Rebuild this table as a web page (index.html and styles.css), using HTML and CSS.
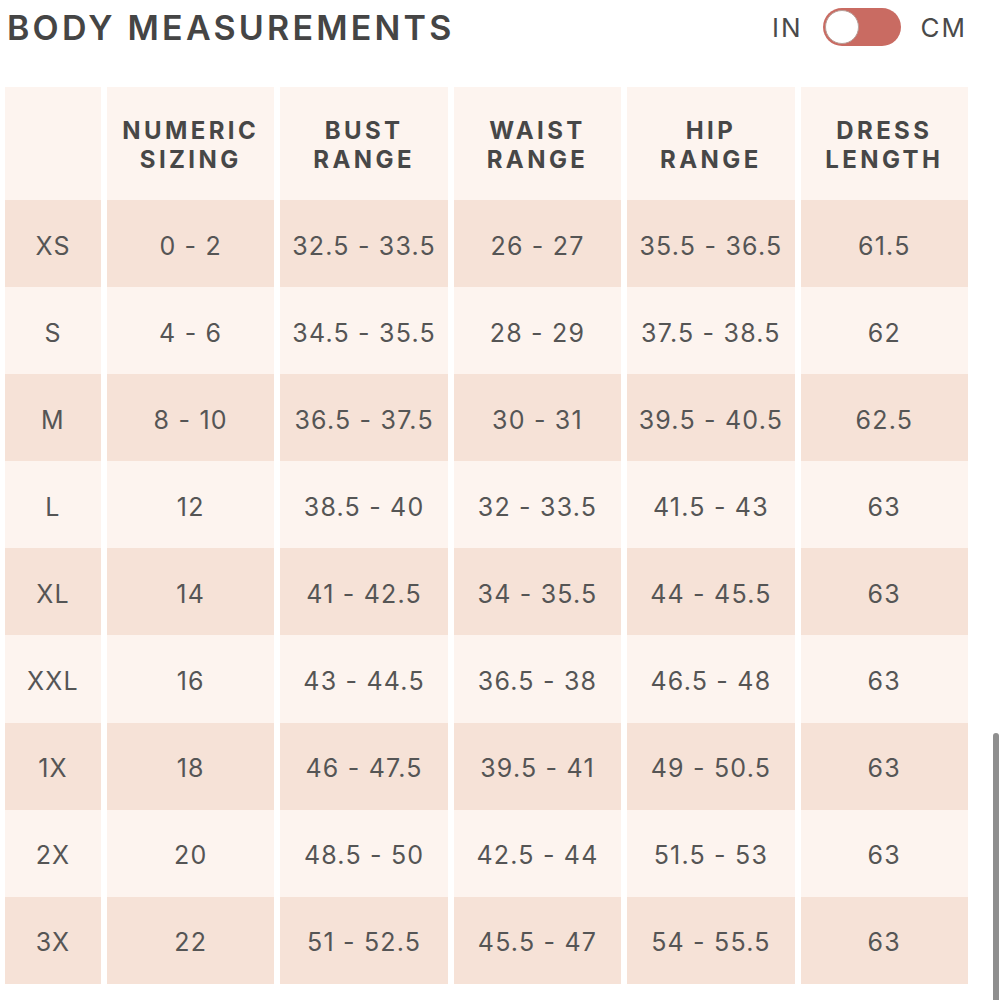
FILE: index.html
```html
<!DOCTYPE html>
<html>
<head>
<meta charset="utf-8">
<link rel="stylesheet" href="styles.css">
</head>
<body>
<div class="page">
  <div class="top">
    <h1 class="title">BODY MEASUREMENTS</h1>
    <div class="units">
      <span class="unit">IN</span>
      <span class="toggle"><span class="knob"></span></span>
      <span class="unit">CM</span>
    </div>
  </div>
  <div class="table">
    <div class="row head">
      <div class="cell"></div>
      <div class="cell">NUMERIC<br>SIZING</div>
      <div class="cell">BUST<br>RANGE</div>
      <div class="cell">WAIST<br>RANGE</div>
      <div class="cell">HIP<br>RANGE</div>
      <div class="cell">DRESS<br>LENGTH</div>
    </div>
    <div class="row dark"><div class="cell">XS</div><div class="cell">0 - 2</div><div class="cell">32.5 - 33.5</div><div class="cell">26 - 27</div><div class="cell">35.5 - 36.5</div><div class="cell">61.5</div></div>
    <div class="row light"><div class="cell">S</div><div class="cell">4 - 6</div><div class="cell">34.5 - 35.5</div><div class="cell">28 - 29</div><div class="cell">37.5 - 38.5</div><div class="cell">62</div></div>
    <div class="row dark"><div class="cell">M</div><div class="cell">8 - 10</div><div class="cell">36.5 - 37.5</div><div class="cell">30 - 31</div><div class="cell">39.5 - 40.5</div><div class="cell">62.5</div></div>
    <div class="row light"><div class="cell">L</div><div class="cell">12</div><div class="cell">38.5 - 40</div><div class="cell">32 - 33.5</div><div class="cell">41.5 - 43</div><div class="cell">63</div></div>
    <div class="row dark"><div class="cell">XL</div><div class="cell">14</div><div class="cell">41 - 42.5</div><div class="cell">34 - 35.5</div><div class="cell">44 - 45.5</div><div class="cell">63</div></div>
    <div class="row light"><div class="cell">XXL</div><div class="cell">16</div><div class="cell">43 - 44.5</div><div class="cell">36.5 - 38</div><div class="cell">46.5 - 48</div><div class="cell">63</div></div>
    <div class="row dark"><div class="cell">1X</div><div class="cell">18</div><div class="cell">46 - 47.5</div><div class="cell">39.5 - 41</div><div class="cell">49 - 50.5</div><div class="cell">63</div></div>
    <div class="row light"><div class="cell">2X</div><div class="cell">20</div><div class="cell">48.5 - 50</div><div class="cell">42.5 - 44</div><div class="cell">51.5 - 53</div><div class="cell">63</div></div>
    <div class="row dark"><div class="cell">3X</div><div class="cell">22</div><div class="cell">51 - 52.5</div><div class="cell">45.5 - 47</div><div class="cell">54 - 55.5</div><div class="cell">63</div></div>
  </div>
</div>
<div class="scrollbar"></div>
</body>
</html>
```
FILE: styles.css
```css
html, body {
  margin: 0;
  padding: 0;
  background: #ffffff;
}
body {
  font-family: Inter, "Noto Sans", sans-serif;
  color: #4a4a4a;
  width: 1000px;
  height: 1000px;
  overflow: hidden;
}
.page {
  padding: 8px 0 0 5px;
  width: 963px;
}
.top {
  display: flex;
  align-items: center;
  justify-content: space-between;
  height: 38px;
  margin-bottom: 41px;
}
.title {
  margin: 0 0 0 2px;
  font-size: 34px;
  font-weight: 600;
  letter-spacing: 3.2px;
  color: #454545;
}
.units {
  display: flex;
  align-items: center;
  gap: 20px;
  margin-right: 1px;
}
.unit {
  font-size: 26px;
  letter-spacing: 2px;
  color: #4a4a4a;
}
.toggle {
  position: relative;
  display: block;
  width: 78px;
  height: 38px;
  border-radius: 19px;
  background: #c96b62;
}
.knob {
  position: absolute;
  left: 2px;
  top: 2px;
  width: 34px;
  height: 34px;
  border-radius: 50%;
  background: #fff;
  box-sizing: border-box;
  border: 1px solid #b8a09a;
}
.table {
  display: flex;
  flex-direction: column;
}
.row {
  display: grid;
  grid-template-columns: 96px repeat(5, 1fr);
  column-gap: 6px;
  height: 87.1px;
}
.row.head {
  height: 113px;
}
.cell {
  display: flex;
  align-items: center;
  justify-content: center;
  text-align: center;
  font-size: 25px;
  letter-spacing: 1.2px;
  color: #555;
  padding-top: 4px;
  box-sizing: border-box;
}
.head .cell {
  background: #fdf4ef;
  font-weight: 700;
  font-size: 24px;
  letter-spacing: 3.4px;
  line-height: 29px;
  color: #474747;
  padding-top: 2px;
}
.dark .cell {
  background: #f6e2d7;
}
.light .cell {
  background: #fdf4ef;
}
.scrollbar {
  position: fixed;
  left: 993px;
  top: 733px;
  width: 6px;
  height: 280px;
  border-radius: 3px;
  background: #8f8f8f;
}
```
